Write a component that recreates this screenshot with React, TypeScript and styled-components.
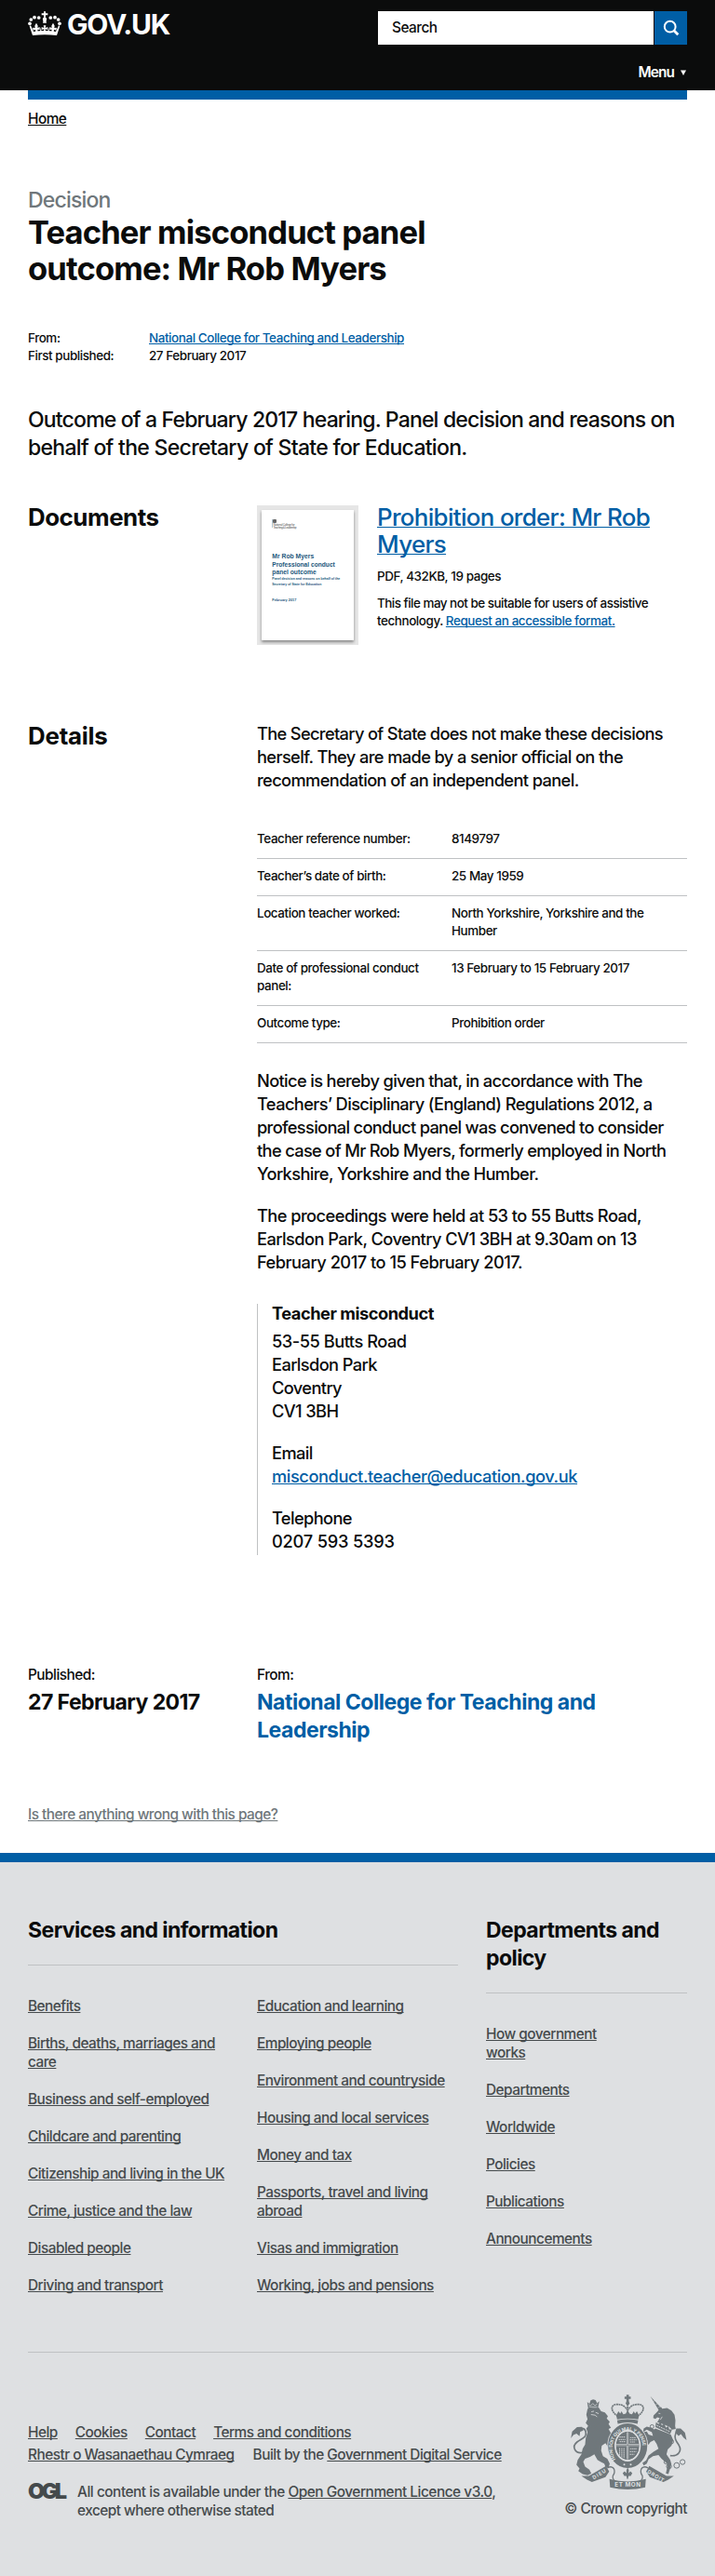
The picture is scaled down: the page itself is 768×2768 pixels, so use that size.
import React from "react";
import styled, { createGlobalStyle, css } from "styled-components";

const ink = "#0b0c0c";
const blue = "#005ea5";
const grey = "#6f777b";
const rule = "#bfc1c3";
const footInk = "#454a4c";
const footBg = "#dee0e2";

const GlobalStyle = createGlobalStyle`
  *, *::before, *::after { box-sizing: border-box; }
  body {
    margin: 0;
    background: #fff;
    color: ${ink};
    font-family: Inter, "Liberation Sans", sans-serif;
    font-weight: 450;
  }
  h1, h2, h3, p, ul, dl, dd, dt, address { margin: 0; padding: 0; font-style: normal; }
  ul { list-style: none; }
  svg { display: block; }
`;

const type14 = css`font-size: 13.44px; line-height: 19px; letter-spacing: -0.42px;`;
const type16 = css`font-size: 15.36px; line-height: 20px; letter-spacing: -0.51px;`;
const type19 = css`font-size: 18.24px; line-height: 25px; letter-spacing: -0.61px;`;
const type24 = css`font-size: 23.04px; line-height: 30px; letter-spacing: -0.84px;`;
const type27 = css`font-size: 25.92px; line-height: 29px; letter-spacing: -0.67px;`;
const bold24 = css`${type24} font-weight: 700; letter-spacing: -0.58px;`;

const Tracked = styled.span<{ $by: number }>`
  letter-spacing: ${(p) => p.$by}px;
`;

const Link = styled.a<{ $tone?: string }>`
  color: ${(p) => p.$tone ?? blue};
  text-decoration: underline;
  text-decoration-thickness: 1px;
  text-underline-offset: 1px;
  text-decoration-skip-ink: none;
`;

const Page = styled.div`
  width: 768px;
  white-space: nowrap;
`;

const Header = styled.header`
  display: flex;
  flex-direction: column;
  justify-content: space-between;
  height: 97px;
  padding: 12px 30px 9px;
  background: ${ink};
  color: #fff;
`;
const HeaderRow = styled.div`
  display: flex;
  justify-content: space-between;
  align-items: flex-start;
`;
const Brand = styled.a`
  display: flex;
  gap: 6px;
  color: #fff;
`;
const BrandName = styled.span`
  font-size: 30px;
  line-height: 28px;
  font-weight: 700;
  letter-spacing: -1.25px;
`;
const SearchForm = styled.form`
  display: flex;
  gap: 1px;
`;
const SearchField = styled.label`
  width: 296px;
  height: 36px;
  padding: 8px 15px;
  background: #fff;
  color: ${ink};
  ${type16}
`;
const SearchButton = styled.button`
  display: flex;
  align-items: center;
  justify-content: center;
  width: 35px;
  height: 36px;
  padding: 0;
  border: 0;
  background: ${blue};
`;
const MenuToggle = styled.a`
  display: flex;
  align-self: flex-end;
  align-items: center;
  gap: 7px;
  padding-right: 1px;
  ${type16}
  font-weight: 600;
  letter-spacing: -0.9px;
`;
const Wrapper = styled.main`
  padding: 0 30px;
`;
const BlueBar = styled.div`
  height: 10px;
  background: ${blue};
`;
const Breadcrumb = styled.nav`
  padding-top: 11px;
  ${type16}
`;
const Kicker = styled.p`
  margin-top: 62px;
  color: ${grey};
  ${type24}
`;
const Title = styled.h1`
  font-size: 34.56px;
  line-height: 39px;
  letter-spacing: -0.86px;
  font-weight: 700;
`;
const Meta = styled.dl`
  display: grid;
  grid-template-columns: 130px 1fr;
  margin-top: 46px;
  ${type14}
`;
const Summary = styled.p`
  margin-top: 44px;
  ${type24}
`;
const Section = styled.section<{ $gap: number }>`
  display: grid;
  grid-template-columns: 246px 1fr;
  align-items: start;
  margin-top: ${(p) => p.$gap}px;
`;
const SectionTitle = styled.h2<{ $track: number }>`
  ${type27}
  font-weight: 700;
  letter-spacing: ${(p) => p.$track}px;
`;
const Attachment = styled.div`
  display: flex;
  align-items: flex-start;
  gap: 20px;
`;
const Thumbnail = styled.div`
  width: 109px;
  height: 150px;
  margin-top: 2px;
  padding: 5px;
  background: #e6e6e6;
`;
const Cover = styled.div`
  height: 140px;
  background: #fff;
  box-shadow: 0 2px 3px rgba(0, 0, 0, 0.42);
`;
const AttachmentTitle = styled.h3`
  ${type27}
  font-weight: 450;
`;
const FileNote = styled.p<{ $gap: number }>`
  margin-top: ${(p) => p.$gap}px;
  ${type14}
`;
const Prose = styled.div`
  display: flex;
  flex-direction: column;
  ${type19}
`;
const Paragraph = styled.p<{ $gap?: number }>`
  margin-top: ${(p) => p.$gap ?? 0}px;
`;
const Facts = styled.dl`
  margin-top: 32px;
  ${type14}
`;
const Fact = styled.div`
  display: grid;
  grid-template-columns: 209px 1fr;
  padding: 9px 0 11px;
  border-bottom: 1px solid ${rule};
`;
const Contact = styled.address`
  margin-top: 32px;
  padding: 0 0 2px 15px;
  border-left: 1px solid ${rule};
`;
const ContactName = styled.h3`
  ${type19}
  line-height: 21px;
  font-weight: 700;
  letter-spacing: -0.47px;
  margin-bottom: 7px;
`;
const Origin = styled.div`
  display: grid;
  grid-template-columns: 246px 1fr;
  margin-top: 119px;
`;
const OriginLabel = styled.p`
  ${type16}
`;
const OriginValue = styled.p<{ $tone?: string }>`
  margin-top: 4px;
  ${bold24}
  color: ${(p) => p.$tone ?? ink};
`;
const Report = styled.p`
  margin: 66px 0 31px;
  ${type16}
`;

const Footer = styled.footer`
  border-top: 10px solid ${blue};
  padding: 58px 30px 0;
  height: 777px;
  background: ${footBg};
  color: ${footInk};
  ${type16}
`;
const FooterNav = styled.div`
  display: grid;
  grid-template-columns: 462px 216px;
  gap: 30px;
  padding-bottom: 61px;
  border-bottom: 1px solid ${rule};
`;
const FooterHeading = styled.h2`
  ${bold24}
  color: ${ink};
  padding-bottom: 22px;
  border-bottom: 1px solid ${rule};
`;
const FooterColumns = styled.div`
  display: grid;
  grid-template-columns: 246px 1fr;
  padding-top: 34px;
`;
const FooterList = styled.ul`
  display: flex;
  flex-direction: column;
  gap: 20px;
`;
const FooterMeta = styled.div`
  display: flex;
  justify-content: space-between;
  padding-top: 45px;
`;
const MetaLinks = styled.div`
  display: flex;
  flex-direction: column;
  gap: 4px;
  padding-top: 31px;
`;
const LinkRow = styled.div<{ $gap: number }>`
  display: flex;
  gap: ${(p) => p.$gap}px;
`;
const Licence = styled.div`
  display: grid;
  grid-template-columns: 53px 1fr;
  margin-top: 16px;
`;
const OglMark = styled.span`
  font-size: 23.5px;
  line-height: 17px;
  font-weight: 900;
  letter-spacing: -3.6px;
`;
const Copyright = styled.div`
  display: flex;
  flex-direction: column;
  align-items: flex-end;
  gap: 11px;
`;

const CrownLogo = () => (
  <svg width="36" height="27" viewBox="30 36 108 81" fill="#fff">
    <path d="M81 37h6v6h7v6h-7v7h-6v-7h-7v-6h7z" />
    <circle cx="84" cy="62" r="6.5" />
    <path d="M81 60h6l3 14h-12z" />
    <circle cx="65" cy="57" r="5.6" />
    <circle cx="103" cy="57" r="5.6" />
    <circle cx="51" cy="56" r="5.6" />
    <circle cx="117" cy="56" r="5.6" />
    <circle cx="40" cy="63" r="5.6" />
    <circle cx="128" cy="63" r="5.6" />
    <circle cx="36" cy="76" r="5.6" />
    <circle cx="132" cy="76" r="5.6" />
    <path d="M35 84l4-2 9 20q36-6 72 0l9-20 4 2-10 30q-39-5-78 0z" />
    <path d="M80 82h8l-2 8 8-3v9l-8-2 1 8h-6l1-8-8 2v-9l8 3z" />
    <path d="M57 74l5 9-1 7 7-3v9l-7-1 1 8h-7l-1-8-7 3-2-9 8 1-1-7zM111 74l-5 9 1 7-7-3v9l7-1-1 8h7l1-8 7 3 2-9-8 1 1-7z" />
    <path d="M71 88l3 14h-5zM97 88l2 14h-5z" />
  </svg>
);

const SearchIcon = () => (
  <svg width="18" height="18" viewBox="0 0 18 18" fill="none" stroke="#fff">
    <circle cx="7.7" cy="7.7" r="5.9" strokeWidth="2" />
    <path d="M11.8 11.8L16.3 16.3" strokeWidth="2.8" />
  </svg>
);

const CoverArt = () => (
  <svg width="99" height="140" viewBox="281 548 99 140" fontFamily="Liberation Sans, sans-serif">
    <rect x="293" y="558" width="4" height="4" rx="1" fill="#666" />
    <path d="M292.5 558v9" stroke="#7ea3b8" strokeWidth=".6" />
    <g fontSize="3.2" fill="#555">
      <text x="293.5" y="564.5" textLength="23">National College for</text>
      <text x="293.5" y="567.5" textLength="25">Teaching &amp; Leadership</text>
    </g>
    <g fontSize="7.2" fontWeight="700" fill="#1d587c">
      <text x="292.3" y="599.8" textLength="45" lengthAdjust="spacingAndGlyphs">Mr Rob Myers</text>
      <text x="292.3" y="608.8" textLength="67.5" lengthAdjust="spacingAndGlyphs">Professional conduct</text>
      <text x="292.3" y="617" textLength="47.5" lengthAdjust="spacingAndGlyphs">panel outcome</text>
    </g>
    <g fontSize="3.7" fontWeight="700" fill="#1d587c">
      <text x="292.3" y="623" textLength="73" lengthAdjust="spacingAndGlyphs">Panel decision and reasons on behalf of the</text>
      <text x="292.3" y="629" textLength="53" lengthAdjust="spacingAndGlyphs">Secretary of State for Education</text>
      <text x="292.3" y="646" textLength="26" lengthAdjust="spacingAndGlyphs">February 2017</text>
    </g>
  </svg>
);

const Crest = () => (
  <svg width="125" height="102" viewBox="38 38 376 308" fill={grey}>
    {/* imperial crown */}
    <path d="M218 39h8v6h6v7h-6v10h-8V52h-6v-7h6z" />
    <circle cx="222" cy="66" r="6" />
    <path d="M190 108C164 92 166 68 190 70c14 0 26 8 30 18M254 108c26-16 24-40 0-38-14 0-26 8-30 18M222 70v34" fill="none" stroke={grey} strokeWidth="5" strokeDasharray="6 1.6" />
    <path d="M185 106l7-14 6 8 4-8 6 10 8-2 6-12 6 12 8 2 6-10 4 8 6-8 7 14-3 13q-34-7-68 0z" />
    <path d="M188 122q34-8 68 0l-2 11q-32-7-64 0z" />
    {/* lion */}
    <path d="M91 62l7 6 4-11 8-3 8 2 5 10 7-6-4 21-32 3z" />
    <path d="M95 70l6 5 8-8 7 7 8-6M97 78h26" stroke={footBg} strokeWidth="2" fill="none" />
    <path d="M92 84L128 80L136 92L148 96L158 108L154 116L164 126L160 134L168 146L160 150L166 160L174 172L160 178L166 192L158 208L150 196L138 204L136 220L142 238L156 246L164 262L160 276L150 272L146 262L134 256L124 250L114 232L100 240L84 246L78 256L84 272L98 282L104 294L92 300L76 296L62 286L66 278L56 266L60 250L72 232L76 214L84 200L86 180L92 160L88 148L94 140L86 130L92 118L88 104z" />
    <path d="M104 94l9-2M118 96l10 4M103 103l14 2 6 6" stroke={footBg} strokeWidth="2.5" fill="none" />
    <path d="M78 226C50 232 40 206 58 192C74 180 90 178 86 158C82 144 66 146 58 156" fill="none" stroke={grey} strokeWidth="5" />
    <path d="M38 180l4-22 16-14 16-1 4 12-10 4-2 14-10-8-10 4z" />
    {/* unicorn */}
    <path d="M296 44L333 84L325 92z" />
    <path d="M305 61l6-4M313 71l7-4M320 81l7-4" stroke={footBg} strokeWidth="1.6" />
    <path d="M318 94L326 84L330 78L334 84L350 82L364 90L374 104L377 122L376 140L378 150L366 152L356 142L336 134L318 128L326 114L318 112L312 117L305 114L306 106z" />
    <path d="M322 99l6 1M334 110l-6 10" stroke={footBg} strokeWidth="2.4" />
    <path d="M314 128L322 134L328 127L333 138L341 133L346 145L354 141L357 151L366 151L360 166L312 144z" />
    <path d="M316 138l44 21" stroke={footBg} strokeWidth="3" strokeDasharray="5 3" />
    <path d="M312 148L362 168L370 186L364 204L352 216L348 232L360 250L364 264L358 284L354 296L346 294L350 276L350 262L332 246L322 234L304 238L290 248L284 262L274 268L270 260L282 252L290 236L306 224L322 214L316 198L308 186L296 192L290 200L282 198L286 186L276 176L272 160L284 158L290 168L304 172L300 158z" />
    <path d="M272 160L274 148L284 142L300 146L314 156L310 164L296 158L284 152z" />
    <path d="M360 236C384 240 400 222 388 202C378 188 372 178 378 164C384 154 394 154 404 162" fill="none" stroke={grey} strokeWidth="5" />
    <path d="M376 160l4-12 14 0 14 14 5 24-10-8-8-12-8 6z" />
    <g fill="none" stroke={grey} strokeWidth="3">
      <circle cx="301" cy="142" r="6" />
      <circle cx="364" cy="191" r="7" />
      <circle cx="346" cy="257" r="6" />
      <circle cx="356" cy="271" r="8" />
      <circle cx="381" cy="268" r="9" />
      <circle cx="400" cy="257" r="8" />
    </g>
    {/* garter and shield */}
    <ellipse cx="222" cy="204" rx="66" ry="75" fill={footBg} />
    <ellipse cx="222" cy="204" rx="53" ry="62" fill="none" stroke={grey} strokeWidth="21" />
    <ellipse cx="222" cy="204" rx="38" ry="46" />
    <path d="M222 160v88M185 202h74" stroke={footBg} strokeWidth="6" />
    <path d="M222 160v88M185 202h74" stroke={grey} strokeWidth="2.4" />
    <path d="M195 176h20M193 184h22M196 191h18M230 178h18M229 185h22M230 192h16M196 212v24M203 212v30M210 212v32M230 214h22M229 223h21M229 232h15" stroke={footBg} strokeWidth="2.6" strokeDasharray="5 1.5" fill="none" />
    <ellipse cx="222" cy="204" rx="40" ry="48" fill="none" stroke={footBg} strokeWidth="2.5" />
    <path id="garter" d="M184 250A50 58 0 1 1 260 250" fill="none" />
    <text fontSize="15" fontWeight="700" fill={footBg}>
      <textPath href="#garter" startOffset="2">HONI SOIT QUI MAL Y PENSE</textPath>
    </text>
    <circle cx="211" cy="265" r="3" fill={footBg} />
    <circle cx="232" cy="265" r="3" fill={footBg} />
    {/* motto ribbon */}
    <path d="M72 302L96 302L152 270L162 288L150 306L106 322L90 314zM372 302L348 302L292 270L282 288L294 306L338 322L354 314z" />
    <path d="M156 276q16-8 22 4 4 12-4 22-2 8 4 14M288 276q-16-8-22 4-4 12 4 22 2 8-4 14" fill="none" stroke={grey} strokeWidth="4" />
    <path d="M163 312q59 16 118 0l-2 27q-57 14-114 0z" />
    <path d="M218 283l4-8 4 8-1 10 6-6 6 6-5 9-7 0-2 10h-3l-2-10-7 0-5-9 6-6 6 6z" />
    <g fontWeight="700" fill={footBg} letterSpacing="0">
      <text x="180" y="338" fontSize="19" textLength="84">ET MON</text>
      <text transform="translate(112 314) rotate(-31)" fontSize="17" textLength="48">DIEU</text>
      <text transform="translate(284 292) rotate(31)" fontSize="17" textLength="60">DROIT</text>
    </g>
  </svg>
);

const facts: [string[], string[]][] = [
  [["Teacher reference number:"], ["8149797"]],
  [["Teacher’s date of birth:"], ["25 May 1959"]],
  [["Location teacher worked:"], ["North Yorkshire, Yorkshire and the", "Humber"]],
  [["Date of professional conduct", "panel:"], ["13 February to 15 February 2017"]],
  [["Outcome type:"], ["Prohibition order"]],
];

const services = [
  [
    ["Benefits"],
    ["Births, deaths, marriages and", "care"],
    ["Business and self-employed"],
    ["Childcare and parenting"],
    ["Citizenship and living in the UK"],
    ["Crime, justice and the law"],
    ["Disabled people"],
    ["Driving and transport"],
  ],
  [
    ["Education and learning"],
    ["Employing people"],
    ["Environment and countryside"],
    ["Housing and local services"],
    ["Money and tax"],
    ["Passports, travel and living", "abroad"],
    ["Visas and immigration"],
    ["Working, jobs and pensions"],
  ],
];
const departments = [
  ["How government", "works"],
  ["Departments"],
  ["Worldwide"],
  ["Policies"],
  ["Publications"],
  ["Announcements"],
];

type Line = string | [text: string, tracking: number];

const Lines = ({ of }: { of: Line[] }) => (
  <>
    {of.map((line, i) => (
      <React.Fragment key={i}>
        {i > 0 && <br />}
        {typeof line === "string" ? line : <Tracked $by={line[1]}>{line[0]}</Tracked>}
      </React.Fragment>
    ))}
  </>
);

const LinkList = ({ items }: { items: string[][] }) => (
  <FooterList>
    {items.map((lines) => (
      <li key={lines[0]}>
        <Link $tone={footInk}>
          <Lines of={lines} />
        </Link>
      </li>
    ))}
  </FooterList>
);

export default function App() {
  return (
    <Page>
      <GlobalStyle />
      <Header>
        <HeaderRow>
          <Brand>
            <CrownLogo />
            <BrandName>GOV.UK</BrandName>
          </Brand>
          <SearchForm>
            <SearchField>Search</SearchField>
            <SearchButton type="button" aria-label="Search">
              <SearchIcon />
            </SearchButton>
          </SearchForm>
        </HeaderRow>
        <MenuToggle>
          Menu
          <svg width="6" height="6" viewBox="0 0 6 6" fill="#fff">
            <path d="M0 .5h6L3 6z" />
          </svg>
        </MenuToggle>
      </Header>
      <Wrapper>
        <BlueBar />
        <Breadcrumb>
          <Link $tone={ink}>Home</Link>
        </Breadcrumb>
        <Kicker>Decision</Kicker>
        <Title>
          <Lines of={["Teacher misconduct panel", "outcome: Mr Rob Myers"]} />
        </Title>
        <Meta>
          <dt>From:</dt>
          <dd>
            <Link>National College for Teaching and Leadership</Link>
          </dd>
          <dt>First published:</dt>
          <dd>27 February 2017</dd>
        </Meta>
        <Summary>
          <Lines
            of={[
              "Outcome of a February 2017 hearing. Panel decision and reasons on",
              ["behalf of the Secretary of State for Education.", -0.71],
            ]}
          />
        </Summary>

        <Section $gap={45}>
          <SectionTitle $track={-0.49}>Documents</SectionTitle>
          <Attachment>
            <Thumbnail>
              <Cover>
                <CoverArt />
              </Cover>
            </Thumbnail>
            <div>
              <AttachmentTitle>
                <Link>
                  <Lines of={["Prohibition order: Mr Rob", "Myers"]} />
                </Link>
              </AttachmentTitle>
              <FileNote $gap={11}>PDF, 432KB, 19 pages</FileNote>
              <FileNote $gap={10}>
                <Tracked $by={-0.5}>This file may not be suitable for users of assistive</Tracked>
                <br />
                technology. <Link>Request an accessible format.</Link>
              </FileNote>
            </div>
          </Attachment>
        </Section>

        <Section $gap={83}>
          <SectionTitle $track={-0.25}>Details</SectionTitle>
          <Prose>
            <Paragraph>
              <Lines
                of={[
                  ["The Secretary of State does not make these decisions", -0.66],
                  "herself. They are made by a senior official on the",
                  "recommendation of an independent panel.",
                ]}
              />
            </Paragraph>
            <Facts>
              {facts.map(([term, value]) => (
                <Fact key={term[0]}>
                  <dt>
                    <Lines of={term} />
                  </dt>
                  <dd>
                    <Lines of={value} />
                  </dd>
                </Fact>
              ))}
            </Facts>
            <Paragraph $gap={28}>
              <Lines
                of={[
                  ["Notice is hereby given that, in accordance with The", -0.64],
                  "Teachers’ Disciplinary (England) Regulations 2012, a",
                  ["professional conduct panel was convened to consider", -0.66],
                  ["the case of Mr Rob Myers, formerly employed in North", -0.65],
                  "Yorkshire, Yorkshire and the Humber.",
                ]}
              />
            </Paragraph>
            <Paragraph $gap={20}>
              <Lines
                of={[
                  ["The proceedings were held at 53 to 55 Butts Road,", -0.55],
                  ["Earlsdon Park, Coventry CV1 3BH at 9.30am on 13", -0.56],
                  ["February 2017 to 15 February 2017.", -0.5],
                ]}
              />
            </Paragraph>
            <Contact>
              <ContactName>Teacher misconduct</ContactName>
              <Paragraph>
                <Lines of={[["53-55 Butts Road", -0.48], "Earlsdon Park", "Coventry", "CV1 3BH"]} />
              </Paragraph>
              <Paragraph $gap={20}>
                Email
                <br />
                <Tracked $by={-0.42}>
                  <Link>misconduct.teacher@education.gov.uk</Link>
                </Tracked>
              </Paragraph>
              <Paragraph $gap={20}>
                <Lines of={["Telephone", ["0207 593 5393", -0.2]]} />
              </Paragraph>
            </Contact>
          </Prose>
        </Section>

        <Origin>
          <div>
            <OriginLabel>Published:</OriginLabel>
            <OriginValue>27 February 2017</OriginValue>
          </div>
          <div>
            <OriginLabel>From:</OriginLabel>
            <OriginValue $tone={blue}>
              <Lines of={[["National College for Teaching and", -0.48], ["Leadership", -0.48]]} />
            </OriginValue>
          </div>
        </Origin>
        <Report>
          <Link $tone={grey}>Is there anything wrong with this page?</Link>
        </Report>
      </Wrapper>

      <Footer>
        <FooterNav>
          <div>
            <FooterHeading>Services and information</FooterHeading>
            <FooterColumns>
              <LinkList items={services[0]} />
              <LinkList items={services[1]} />
            </FooterColumns>
          </div>
          <div>
            <FooterHeading>
              <Lines of={["Departments and", "policy"]} />
            </FooterHeading>
            <FooterColumns>
              <LinkList items={departments} />
            </FooterColumns>
          </div>
        </FooterNav>
        <FooterMeta>
          <MetaLinks>
            <LinkRow $gap={19}>
              {["Help", "Cookies", "Contact", "Terms and conditions"].map((t) => (
                <Link key={t} $tone={footInk}>
                  {t}
                </Link>
              ))}
            </LinkRow>
            <LinkRow $gap={20}>
              <Link $tone={footInk}>Rhestr o Wasanaethau Cymraeg</Link>
              <span>
                Built by the <Link $tone={footInk}>Government Digital Service</Link>
              </span>
            </LinkRow>
            <Licence>
              <OglMark>OGL</OglMark>
              <p>
                <Tracked $by={-0.46}>
                  All content is available under the <Link $tone={footInk}>Open Government Licence v3.0</Link>,
                </Tracked>
                <br />
                except where otherwise stated
              </p>
            </Licence>
          </MetaLinks>
          <Copyright>
            <Crest />
            <span>© Crown copyright</span>
          </Copyright>
        </FooterMeta>
      </Footer>
    </Page>
  );
}
